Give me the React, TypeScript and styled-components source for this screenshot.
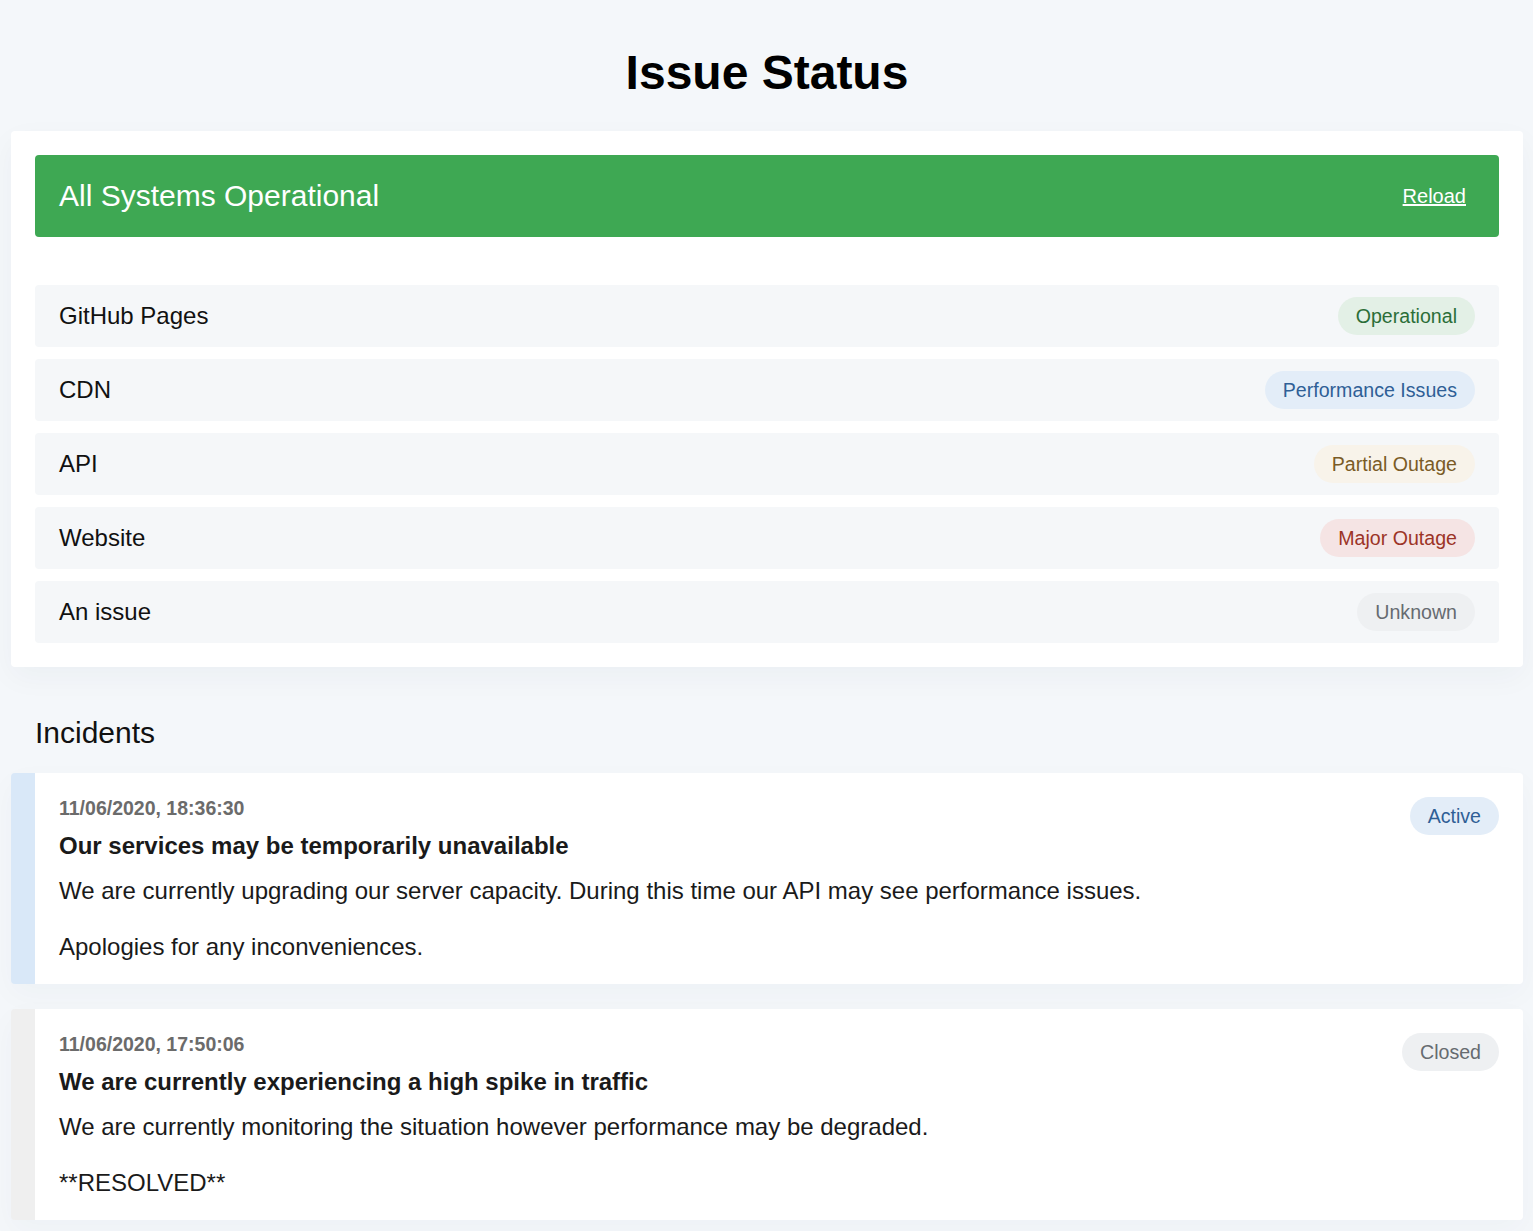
import React from "react";
import styled, { createGlobalStyle } from "styled-components";

const Global = createGlobalStyle`
  html, body { margin: 0; padding: 0; background: #f4f7fa; }
  body { font-family: "Liberation Sans", Arial, sans-serif; color: #111; }
`;

const Page = styled.div`
  padding: 0 10px 12px 11px;
`;

const Title = styled.h1`
  margin: 0;
  padding: 40px 0 25px;
  text-align: center;
  font-size: 48px;
  line-height: 66px;
  font-weight: 700;
  color: #000;
`;

const Card = styled.section`
  background: #fff;
  border-radius: 4px;
  padding: 24px;
  box-shadow: 0 10px 30px rgba(30, 50, 80, 0.04);
`;

const Banner = styled.div`
  background: #3ea853;
  border-radius: 4px;
  padding: 24px;
  display: flex;
  align-items: center;
  justify-content: space-between;
  margin-bottom: 48px;
`;

const BannerText = styled.div`
  color: #fff;
  font-size: 30px;
  line-height: 34px;
`;

const ReloadLink = styled.a`
  color: #fff;
  font-size: 20px;
  text-decoration: underline;
  margin-right: 9px;
  cursor: pointer;
`;

const List = styled.div`
  display: flex;
  flex-direction: column;
  gap: 12px;
`;

const Row = styled.div`
  background: #f5f7f9;
  border-radius: 4px;
  padding: 12px 24px;
  display: flex;
  align-items: center;
  justify-content: space-between;
`;

const RowName = styled.div`
  font-size: 24px;
  line-height: 38px;
  color: #111;
`;

type Tone = "green" | "blue" | "yellow" | "red" | "grey";

const tones: Record<Tone, { bg: string; fg: string }> = {
  green: { bg: "#e3f0e6", fg: "#2b6e38" },
  blue: { bg: "#e3edf8", fg: "#2f5f96" },
  yellow: { bg: "#f8f3ea", fg: "#7a5b26" },
  red: { bg: "#f5e4e4", fg: "#9c3427" },
  grey: { bg: "#eef0f2", fg: "#666b70" },
};

const Badge = styled.span<{ $tone: Tone }>`
  display: inline-block;
  padding: 0 18px;
  height: 38px;
  line-height: 38px;
  border-radius: 19px;
  font-size: 19.6px;
  background: ${(p) => tones[p.$tone].bg};
  color: ${(p) => tones[p.$tone].fg};
  white-space: nowrap;
`;

const IncidentBadge = styled(Badge)`
  margin-top: -1px;
`;

const SectionTitle = styled.h2`
  margin: 50px 0 24px 24px;
  font-size: 30px;
  line-height: 32px;
  font-weight: 400;
  color: #111;
`;

const Incidents = styled.div`
  display: flex;
  flex-direction: column;
  gap: 25px;
`;

const IncidentCard = styled.article<{ $accent: string }>`
  background: #fff;
  border-radius: 4px;
  border-left: 24px solid ${(p) => p.$accent};
  padding: 25px 24px 21px 24px;
  display: flex;
  align-items: flex-start;
  justify-content: space-between;
  box-shadow: 0 10px 30px rgba(30, 50, 80, 0.03);
`;

const IncidentBody = styled.div`
  flex: 1;
`;

const IncidentDate = styled.div`
  font-size: 19.5px;
  line-height: 21px;
  font-weight: 700;
  color: #6b6b6b;
`;

const IncidentTitle = styled.h3`
  margin: 10px 0 12px;
  font-size: 24px;
  line-height: 33px;
  font-weight: 700;
  color: #1a1a1a;
`;

const Paragraph = styled.p`
  margin: 0 0 23px;
  font-size: 24px;
  line-height: 33px;
  color: #1a1a1a;
  &:last-child { margin-bottom: 0; }
`;

const services: { name: string; status: string; tone: Tone }[] = [
  { name: "GitHub Pages", status: "Operational", tone: "green" },
  { name: "CDN", status: "Performance Issues", tone: "blue" },
  { name: "API", status: "Partial Outage", tone: "yellow" },
  { name: "Website", status: "Major Outage", tone: "red" },
  { name: "An issue", status: "Unknown", tone: "grey" },
];

const incidents = [
  {
    date: "11/06/2020, 18:36:30",
    title: "Our services may be temporarily unavailable",
    body: [
      "We are currently upgrading our server capacity. During this time our API may see performance issues.",
      "Apologies for any inconveniences.",
    ],
    status: "Active",
    tone: "blue" as Tone,
    accent: "#d9e8f8",
  },
  {
    date: "11/06/2020, 17:50:06",
    title: "We are currently experiencing a high spike in traffic",
    body: [
      "We are currently monitoring the situation however performance may be degraded.",
      "**RESOLVED**",
    ],
    status: "Closed",
    tone: "grey" as Tone,
    accent: "#efefef",
  },
];

export default function App() {
  return (
    <>
      <Global />
      <Page>
        <Title>Issue Status</Title>
        <Card>
          <Banner>
            <BannerText>All Systems Operational</BannerText>
            <ReloadLink>Reload</ReloadLink>
          </Banner>
          <List>
            {services.map((s) => (
              <Row key={s.name}>
                <RowName>{s.name}</RowName>
                <Badge $tone={s.tone}>{s.status}</Badge>
              </Row>
            ))}
          </List>
        </Card>
        <SectionTitle>Incidents</SectionTitle>
        <Incidents>
          {incidents.map((i) => (
            <IncidentCard key={i.date} $accent={i.accent}>
              <IncidentBody>
                <IncidentDate>{i.date}</IncidentDate>
                <IncidentTitle>{i.title}</IncidentTitle>
                {i.body.map((b) => (
                  <Paragraph key={b}>{b}</Paragraph>
                ))}
              </IncidentBody>
              <IncidentBadge $tone={i.tone}>{i.status}</IncidentBadge>
            </IncidentCard>
          ))}
        </Incidents>
      </Page>
    </>
  );
}
